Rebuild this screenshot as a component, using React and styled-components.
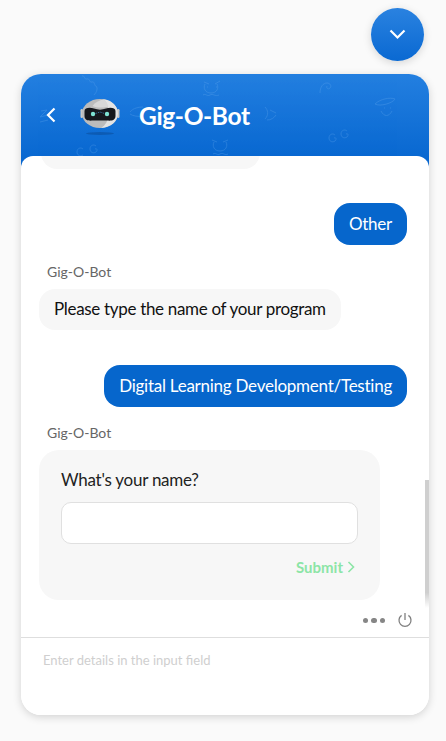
import React from 'react';
import styled, { createGlobalStyle } from 'styled-components';

const GlobalStyle = createGlobalStyle`
  html, body {
    margin: 0;
    padding: 0;
    background: #fafafa;
    font-family: "Lato", "Liberation Sans", sans-serif;
  }
  * {
    box-sizing: border-box;
  }
`;

const Page = styled.div`
  width: 446px;
  height: 741px;
  padding: 8px 17px 0 21px;
  display: flex;
  flex-direction: column;
  align-items: flex-end;
  overflow: hidden;
`;

const ToggleButton = styled.button`
  width: 53px;
  height: 53px;
  margin-right: 5px;
  padding: 0;
  border: none;
  border-radius: 50%;
  background: linear-gradient(180deg, #2a82e0 0%, #0a69d2 100%);
  box-shadow: 0 2px 8px rgba(0, 0, 0, 0.15);
  display: flex;
  align-items: center;
  justify-content: center;
`;

const Card = styled.div`
  width: 408px;
  height: 641px;
  margin-top: 13px;
  border-radius: 20px;
  background: #fff;
  box-shadow: 0 2px 8px rgba(0, 0, 0, 0.16);
  display: flex;
  flex-direction: column;
  overflow: hidden;
`;

const Header = styled.div`
  position: relative;
  height: 94px;
  flex: none;
  padding: 0 0 12px 25px;
  background: linear-gradient(180deg, #237fe0 0%, #0565cf 100%);
  display: flex;
  align-items: center;
  overflow: hidden;
`;

const Doodles = styled.svg`
  position: absolute;
  left: 0;
  top: 0;
  pointer-events: none;
`;

const BackButton = styled.div`
  width: 16px;
  height: 20px;
  margin-right: 18px;
  display: flex;
  align-items: center;
  position: relative;
`;

const Avatar = styled.svg`
  margin-right: 19px;
  position: relative;
  top: 3px;
`;

const Title = styled.div`
  position: relative;
  font-size: 24.5px;
  font-weight: 700;
  letter-spacing: -0.35px;
  color: #fff;
`;

const Body = styled.div`
  position: relative;
  flex: 1;
  min-height: 0;
  margin-top: -12px;
  border-radius: 12px 12px 0 0;
  background: #fff;
  display: flex;
  flex-direction: column;
  overflow: hidden;
`;

const Messages = styled.div`
  flex: 1;
  min-height: 0;
  padding: 0 22px 0 18px;
  display: flex;
  flex-direction: column;
  justify-content: flex-end;
  overflow: hidden;
`;

const Bubble = styled.div`
  flex: none;
  height: ${(p) => (p.$mine ? '42px' : '41px')};
  padding: 0 15px 2px;
  border-radius: 16px;
  font-size: 17px;
  letter-spacing: ${(p) => (p.$mine ? '-0.25px' : '-0.32px')};
  display: flex;
  align-items: center;
  align-self: ${(p) => (p.$mine ? 'flex-end' : 'flex-start')};
  margin-top: ${(p) => p.$gap || 0}px;
  background: ${(p) => (p.$mine ? '#0666cc' : '#f7f7f7')};
  color: ${(p) => (p.$mine ? '#fff' : '#111')};
`;

const ClippedBubble = styled.div`
  flex: none;
  width: 219px;
  height: 41px;
  margin-left: 2px;
  border-radius: 16px;
  background: #f7f7f7;
`;

const BotName = styled.div`
  flex: none;
  height: 17px;
  line-height: 17px;
  margin: ${(p) => p.$top || 17}px 0 9px 8px;
  font-size: 14px;
  color: #666;
`;

const FormCard = styled.div`
  flex: none;
  width: 341px;
  height: 150px;
  padding: 19px 22px 0;
  border-radius: 20px;
  background: #f7f7f7;
`;

const FormLabel = styled.div`
  height: 22px;
  line-height: 22px;
  font-size: 17px;
  letter-spacing: -0.25px;
  color: #222;
`;

const NameInput = styled.input`
  display: block;
  width: 297px;
  height: 42px;
  margin-top: 11px;
  border: 1px solid #e0e0e0;
  border-radius: 10px;
  background: #fff;
`;

const SubmitRow = styled.div`
  margin-top: 14px;
  padding-right: 3px;
  display: flex;
  justify-content: flex-end;
  align-items: center;
  gap: 4px;
`;

const SubmitText = styled.span`
  font-size: 15px;
  font-weight: 700;
  color: #8ce5a6;
`;

const ScrollThumb = styled.div`
  position: absolute;
  right: 0;
  top: 324px;
  width: 4px;
  height: 128px;
  background: linear-gradient(180deg, #cfcfcf 0%, #cfcfcf 88%, #ffffff 100%);
`;

const ToolRow = styled.div`
  flex: none;
  height: 37px;
  padding: 2px 16px 0 0;
  display: flex;
  align-items: center;
  justify-content: flex-end;
  gap: 12px;
`;

const Dots = styled.div`
  margin-top: 2px;
  display: flex;
  gap: 3px;
`;

const Dot = styled.span`
  width: 5.5px;
  height: 5.5px;
  border-radius: 50%;
  background: #868686;
`;

const Composer = styled.div`
  flex: none;
  height: 78px;
  padding: 14px 22px 0;
  border-top: 1px solid #dedede;
`;

const Placeholder = styled.div`
  height: 17px;
  line-height: 17px;
  font-size: 13px;
  color: #cfcfcf;
`;

const Robot = () => (
  <Avatar width="40" height="40" viewBox="0 0 40 40">
    <ellipse cx="20" cy="35.5" rx="14" ry="1.4" fill="#0b4c99" opacity="0.55" />
    <rect x="0.5" y="11" width="2.5" height="9" rx="1.2" fill="#c9c9c9" />
    <rect x="37" y="11" width="2.5" height="9" rx="1.2" fill="#c9c9c9" />
    <ellipse cx="20" cy="15.5" rx="18" ry="14.5" fill="#bcbcbc" />
    <path d="M24 1.2 C33 2.5 38 9 38 15.5 C38 23 31 29.5 21 30 C30 25 31 11 24 1.2 Z" fill="#e4e4e4" />
    <path d="M24 1.2 C19 2 15 4.5 12.5 8 C17 10 24 10 28.5 8.5 C27.5 5.5 26 3 24 1.2 Z" fill="#d8d8d8" />
    <path d="M4.5 13 C4.5 9.5 10 9 14 10.5 C18 12 22 12 26 10.5 C30 9 35.5 9.5 35.5 13 L35.5 18 C35.5 22.5 31 23 27 22.5 L13 22.5 C9 23 4.5 22.5 4.5 18 Z" fill="#16181d" />
    <circle cx="13" cy="16" r="2.2" fill="#7fe3d3" />
    <circle cx="27" cy="16" r="2.2" fill="#7fe3d3" />
    <path d="M15.5 15.5 L20 14 L24.5 15.5" fill="none" stroke="#3c7fb0" strokeWidth="0.8" strokeDasharray="1.5 1" />
  </Avatar>
);

const App = () => {
  return (
    <Page>
      <GlobalStyle />
      <ToggleButton>
        <svg width="17" height="11" viewBox="0 0 17 11">
          <path d="M1.5 1.5 L8.5 8.5 L15.5 1.5" fill="none" stroke="#fff" strokeWidth="2.2" />
        </svg>
      </ToggleButton>
      <Card>
        <Header>
          <Doodles width="408" height="94" viewBox="0 0 408 94" fill="none" stroke="#6fb0f0" strokeWidth="0.9" opacity="0.3">
            <path d="M61 2 c3 -1 2 4 5 3 c3 -1 2 4 5 3 c3 -1 2 4 4 4 c2 2 1 6 -2 9" />
            <path d="M183 8 l5 2 M199 7 l-5 3 M186 13 h1 M195 13 h1 M184 10 c-2 4 0 9 6 9 c6 0 8 -5 6 -9 M182 21 c3 -2 4 2 7 0 c3 -2 5 2 9 0" />
            <path d="M299 19 c0 -6 3 -10 7 -10 c3 0 5 3 3 5 c-2 2 -4 0 -3 -2" />
            <path d="M354 30 c5 -5 15 -7 20 -5 c-2 4 -15 8 -20 5 Z M360 37 c3 6 8 6 11 0 M363 34 h1 M369 34 h1" />
            <path d="M244 33 c3 3 4 8 0 12 M249 36 l6 3 M246 46 c4 0 7 -2 9 -5" />
            <path d="M314 61 c-2 -2 -6 -1 -6 3 c0 3 3 5 6 3 c2 -2 1 -4 -1 -3 M326 57 c-2 -2 -6 -1 -6 3 c0 3 3 5 6 3 c2 -2 1 -4 -1 -3" />
            <path d="M193 68 c-2 4 0 9 6 9 c6 0 8 -5 6 -9 M191 66 l5 2 M207 66 l-5 2 M192 80 c3 -2 4 2 7 0 c3 -2 5 2 8 0" />
            <path d="M62 75 c-2 -2 -6 -1 -6 3 c0 3 3 5 6 3 M75 72 c-2 -2 -6 -1 -6 3 c0 3 3 5 6 3 c2 -2 1 -4 -1 -3" />
            <path d="M109 38 c3 -4 9 -5 13 -5 M109 40 c3 2 8 3 13 2" />
            <path d="M20 37 l6 -1 l-7 7 l8 -2 M19 48 l8 -2" />
          </Doodles>
          <BackButton>
            <svg width="10" height="16" viewBox="0 0 10 16">
              <path d="M8.5 1.5 L2 8 L8.5 14.5" fill="none" stroke="#fff" strokeWidth="2.2" />
            </svg>
          </BackButton>
          <Robot />
          <Title>Gig-O-Bot</Title>
        </Header>
        <Body>
          <Messages>
            <ClippedBubble />
            <Bubble $mine $gap={34}>Other</Bubble>
            <BotName $top={18}>Gig-O-Bot</BotName>
            <Bubble>Please type the name of your program</Bubble>
            <Bubble $mine $gap={35}>Digital Learning Development/Testing</Bubble>
            <BotName>Gig-O-Bot</BotName>
            <FormCard>
              <FormLabel>What's your name?</FormLabel>
              <NameInput type="text" />
              <SubmitRow>
                <SubmitText>Submit</SubmitText>
                <svg width="8" height="12" viewBox="0 0 8 12">
                  <path d="M1.5 1 L6.5 6 L1.5 11" fill="none" stroke="#8ce5a6" strokeWidth="1.6" />
                </svg>
              </SubmitRow>
            </FormCard>
          </Messages>
          <ScrollThumb />
          <ToolRow>
            <Dots>
              <Dot />
              <Dot />
              <Dot />
            </Dots>
            <svg width="16" height="16" viewBox="0 0 16 16">
              <path d="M4.6 3.4 A6 6 0 1 0 11.4 3.4 M8 1 V8" fill="none" stroke="#808080" strokeWidth="1.3" />
            </svg>
          </ToolRow>
          <Composer>
            <Placeholder>Enter details in the input field</Placeholder>
          </Composer>
        </Body>
      </Card>
    </Page>
  );
};

export default App;
